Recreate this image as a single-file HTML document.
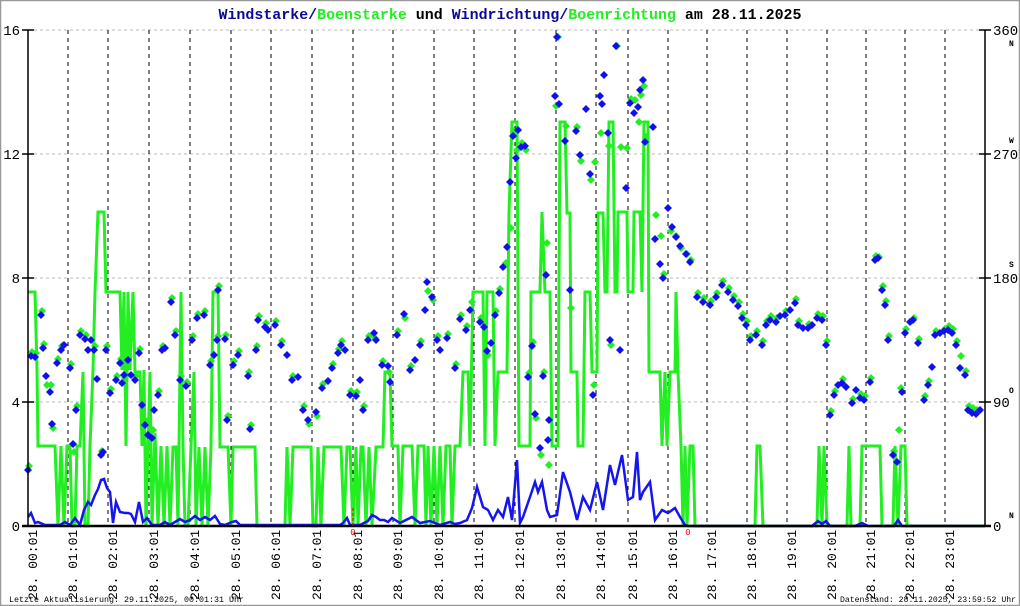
<!DOCTYPE html>
<html><head><meta charset="utf-8"><style>
html,body{margin:0;padding:0;background:#fff;}
svg{display:block;}
text{font-family:"Liberation Mono","DejaVu Sans Mono",monospace;}
</style></head><body>
<svg width="1020" height="606" viewBox="0 0 1020 606" xmlns="http://www.w3.org/2000/svg">
<defs>
<path id="db" d="M0,-4 L4,0 L0,4 L-4,0 Z" fill="#1010ee"/>
<path id="dg" d="M0,-4 L4,0 L0,4 L-4,0 Z" fill="#22ee22"/>
</defs>
<rect x="0.5" y="0.5" width="1019" height="605" fill="#fff" stroke="#999" stroke-width="1.5"/>
<text x="510" y="19" text-anchor="middle" font-size="15" font-weight="bold" textLength="583" lengthAdjust="spacingAndGlyphs"><tspan fill="#0a0a9a">Windstarke/</tspan><tspan fill="#22ee22">Boenstarke</tspan><tspan fill="#000"> und </tspan><tspan fill="#0a0a9a">Windrichtung/</tspan><tspan fill="#22ee22">Boenrichtung</tspan><tspan fill="#000"> am 28.11.2025</tspan></text>
<g stroke="#bbb" stroke-width="1" stroke-dasharray="3,3">
<line x1="28" y1="30" x2="985" y2="30"/><line x1="28" y1="154" x2="985" y2="154"/><line x1="28" y1="278" x2="985" y2="278"/><line x1="28" y1="402" x2="985" y2="402"/>
</g>
<g stroke="#000" stroke-width="1" stroke-dasharray="4,4">
<line x1="68" y1="30" x2="68" y2="526"/><line x1="108" y1="30" x2="108" y2="526"/><line x1="149" y1="30" x2="149" y2="526"/><line x1="190" y1="30" x2="190" y2="526"/><line x1="231" y1="30" x2="231" y2="526"/><line x1="271" y1="30" x2="271" y2="526"/><line x1="312" y1="30" x2="312" y2="526"/><line x1="353" y1="30" x2="353" y2="526"/><line x1="393" y1="30" x2="393" y2="526"/><line x1="434" y1="30" x2="434" y2="526"/><line x1="474" y1="30" x2="474" y2="526"/><line x1="515" y1="30" x2="515" y2="526"/><line x1="556" y1="30" x2="556" y2="526"/><line x1="596" y1="30" x2="596" y2="526"/><line x1="628" y1="30" x2="628" y2="526"/><line x1="668" y1="30" x2="668" y2="526"/><line x1="707" y1="30" x2="707" y2="526"/><line x1="747" y1="30" x2="747" y2="526"/><line x1="787" y1="30" x2="787" y2="526"/><line x1="827" y1="30" x2="827" y2="526"/><line x1="866" y1="30" x2="866" y2="526"/><line x1="905" y1="30" x2="905" y2="526"/><line x1="945" y1="30" x2="945" y2="526"/>
</g>
<polyline fill="none" stroke="#22ee22" stroke-width="3" stroke-linejoin="miter" points="28,292 35,292 37,370 38,446 55,446 58,526 61,446 64,526 67,446 70,446 72,526 75,526 77,446 80,446 83,372 85,526 88,526 90,446 93,370 95,292 98,212 104,212 106,292 108,292 120,292 122,370 124,292 126,446 128,292 130,370 133,292 135,372 140,372 142,446 144,370 146,526 148,446 150,372 152,526 155,433 158,526 161,446 164,526 167,446 170,526 173,447 176,447 178,526 181,292 183,447 185,526 188,526 191,447 194,372 196,526 199,447 202,526 205,447 208,526 211,447 213,292 218,292 220,447 228,447 231,526 233,447 255,447 257,526 285,526 287,447 290,526 293,447 311,447 313,526 316,526 318,447 321,526 324,447 341,447 344,526 347,447 350,447 353,526 356,447 358,526 361,447 363,447 366,526 369,447 372,526 376,447 383,447 385,372 390,372 392,446 398,446 400,526 403,446 412,446 415,526 418,446 424,446 426,526 428,446 431,526 434,446 437,526 440,446 443,526 446,446 450,446 452,526 455,446 460,446 463,372 468,372 470,446 473,292 483,292 485,446 487,292 493,292 495,446 498,372 507,372 509,213 512,122 517,122 519,446 530,446 531,292 540,292 542,212 545,292 550,292 552,446 558,446 560,122 565,122 567,213 570,213 571,372 577,372 578,446 583,446 585,292 590,292 592,372 597,372 598,213 603,213 605,292 607,292 609,122 613,122 615,292 617,292 618,212 627,212 628,292 633,292 634,212 640,212 642,292 644,122 648,122 649,372 660,372 662,446 665,372 667,446 670,372 675,372 676,292 678,372 681,446 683,526 685,446 687,526 690,446 693,446 695,526 697,526 755,526 757,446 760,446 763,526 817,526 819,446 822,526 824,446 827,526 830,526 833,526 847,526 849,446 851,526 860,526 862,446 880,446 882,526 893,526 895,446 898,526 901,446 905,446 907,526 985,526"/>
<polyline fill="none" stroke="#1515ee" stroke-width="2.5" points="28,517 31,513 35,523 38,522 45,525 60,525 65,522 70,525 75,518 80,525 84,510 88,502 91,505 95,495 98,489 101,480 104,479 107,488 110,492 113,523 116,502 120,512 125,513 128,513 131,514 135,522 139,502 143,522 147,518 152,525 160,525 165,522 170,525 180,519 185,522 190,520 195,516 200,520 205,517 210,520 215,516 220,524 225,525 232,522 236,521 240,525 300,525 340,525 343,523 347,518 350,525 360,525 368,521 372,515 376,517 380,520 384,520 388,522 392,518 400,523 404,521 412,517 420,523 430,521 440,525 450,522 455,524 460,523 467,520 472,508 477,487 483,507 488,510 493,520 498,510 503,517 508,497 512,520 517,460 520,523 523,517 530,497 535,482 538,492 542,482 547,510 550,517 557,515 563,472 570,492 577,520 583,497 590,510 597,482 603,510 610,465 615,485 622,455 628,500 633,497 637,452 640,500 643,492 650,482 655,520 662,510 668,513 675,508 680,517 685,525 688,526 812,526 818,521 822,524 826,521 830,526 855,526 862,523 868,526 894,526 898,520 902,526 985,526"/>
<g>
<use href="#dg" x="29" y="466"/><use href="#dg" x="32" y="352"/><use href="#dg" x="36" y="353"/><use href="#dg" x="42" y="311"/><use href="#dg" x="44" y="344"/><use href="#dg" x="47" y="385"/><use href="#dg" x="51" y="385"/><use href="#dg" x="53" y="428"/><use href="#dg" x="58" y="359"/><use href="#dg" x="62" y="346"/><use href="#dg" x="71" y="364"/><use href="#dg" x="74" y="452"/><use href="#dg" x="77" y="406"/><use href="#dg" x="81" y="331"/><use href="#dg" x="86" y="335"/><use href="#dg" x="95" y="346"/><use href="#dg" x="102" y="451"/><use href="#dg" x="107" y="346"/><use href="#dg" x="111" y="389"/><use href="#dg" x="117" y="376"/><use href="#dg" x="121" y="359"/><use href="#dg" x="125" y="378"/><use href="#dg" x="129" y="356"/><use href="#dg" x="136" y="376"/><use href="#dg" x="140" y="349"/><use href="#dg" x="146" y="421"/><use href="#dg" x="153" y="430"/><use href="#dg" x="159" y="391"/><use href="#dg" x="163" y="346"/><use href="#dg" x="172" y="298"/><use href="#dg" x="176" y="331"/><use href="#dg" x="181" y="376"/><use href="#dg" x="187" y="382"/><use href="#dg" x="193" y="336"/><use href="#dg" x="198" y="314"/><use href="#dg" x="205" y="311"/><use href="#dg" x="211" y="361"/><use href="#dg" x="218" y="336"/><use href="#dg" x="219" y="286"/><use href="#dg" x="226" y="335"/><use href="#dg" x="228" y="416"/><use href="#dg" x="234" y="361"/><use href="#dg" x="239" y="351"/><use href="#dg" x="249" y="372"/><use href="#dg" x="251" y="425"/><use href="#dg" x="257" y="346"/><use href="#dg" x="259" y="316"/><use href="#dg" x="266" y="323"/><use href="#dg" x="276" y="321"/><use href="#dg" x="282" y="341"/><use href="#dg" x="293" y="376"/><use href="#dg" x="304" y="406"/><use href="#dg" x="309" y="424"/><use href="#dg" x="317" y="416"/><use href="#dg" x="323" y="384"/><use href="#dg" x="333" y="364"/><use href="#dg" x="339" y="349"/><use href="#dg" x="342" y="341"/><use href="#dg" x="351" y="391"/><use href="#dg" x="357" y="392"/><use href="#dg" x="364" y="406"/><use href="#dg" x="369" y="336"/><use href="#dg" x="375" y="338"/><use href="#dg" x="383" y="361"/><use href="#dg" x="389" y="372"/><use href="#dg" x="398" y="331"/><use href="#dg" x="405" y="318"/><use href="#dg" x="411" y="366"/><use href="#dg" x="421" y="341"/><use href="#dg" x="428" y="291"/><use href="#dg" x="433" y="300"/><use href="#dg" x="438" y="336"/><use href="#dg" x="448" y="334"/><use href="#dg" x="456" y="364"/><use href="#dg" x="461" y="315"/><use href="#dg" x="467" y="326"/><use href="#dg" x="472" y="302"/><use href="#dg" x="481" y="318"/><use href="#dg" x="488" y="355"/><use href="#dg" x="496" y="311"/><use href="#dg" x="500" y="289"/><use href="#dg" x="506" y="263"/><use href="#dg" x="511" y="228"/><use href="#dg" x="514" y="131"/><use href="#dg" x="517" y="150"/><use href="#dg" x="522" y="143"/><use href="#dg" x="526" y="150"/><use href="#dg" x="529" y="373"/><use href="#dg" x="533" y="342"/><use href="#dg" x="536" y="418"/><use href="#dg" x="541" y="455"/><use href="#dg" x="544" y="372"/><use href="#dg" x="547" y="243"/><use href="#dg" x="549" y="465"/><use href="#dg" x="556" y="106"/><use href="#dg" x="558" y="37"/><use href="#dg" x="566" y="126"/><use href="#dg" x="571" y="308"/><use href="#dg" x="577" y="127"/><use href="#dg" x="581" y="161"/><use href="#dg" x="591" y="180"/><use href="#dg" x="594" y="385"/><use href="#dg" x="595" y="162"/><use href="#dg" x="601" y="133"/><use href="#dg" x="609" y="146"/><use href="#dg" x="611" y="345"/><use href="#dg" x="617" y="46"/><use href="#dg" x="621" y="147"/><use href="#dg" x="627" y="148"/><use href="#dg" x="631" y="99"/><use href="#dg" x="635" y="100"/><use href="#dg" x="639" y="122"/><use href="#dg" x="641" y="95"/><use href="#dg" x="644" y="86"/><use href="#dg" x="646" y="137"/><use href="#dg" x="656" y="215"/><use href="#dg" x="661" y="236"/><use href="#dg" x="664" y="274"/><use href="#dg" x="671" y="231"/><use href="#dg" x="676" y="236"/><use href="#dg" x="681" y="248"/><use href="#dg" x="687" y="254"/><use href="#dg" x="691" y="260"/><use href="#dg" x="698" y="293"/><use href="#dg" x="704" y="298"/><use href="#dg" x="711" y="301"/><use href="#dg" x="717" y="293"/><use href="#dg" x="723" y="281"/><use href="#dg" x="729" y="288"/><use href="#dg" x="734" y="296"/><use href="#dg" x="739" y="302"/><use href="#dg" x="743" y="314"/><use href="#dg" x="747" y="321"/><use href="#dg" x="751" y="336"/><use href="#dg" x="757" y="331"/><use href="#dg" x="763" y="341"/><use href="#dg" x="767" y="321"/><use href="#dg" x="771" y="316"/><use href="#dg" x="777" y="318"/><use href="#dg" x="786" y="311"/><use href="#dg" x="796" y="299"/><use href="#dg" x="799" y="321"/><use href="#dg" x="809" y="324"/><use href="#dg" x="818" y="314"/><use href="#dg" x="823" y="316"/><use href="#dg" x="827" y="341"/><use href="#dg" x="831" y="411"/><use href="#dg" x="835" y="391"/><use href="#dg" x="843" y="379"/><use href="#dg" x="853" y="399"/><use href="#dg" x="861" y="394"/><use href="#dg" x="865" y="396"/><use href="#dg" x="871" y="378"/><use href="#dg" x="876" y="256"/><use href="#dg" x="879" y="257"/><use href="#dg" x="883" y="286"/><use href="#dg" x="886" y="301"/><use href="#dg" x="889" y="336"/><use href="#dg" x="894" y="451"/><use href="#dg" x="899" y="430"/><use href="#dg" x="901" y="388"/><use href="#dg" x="906" y="329"/><use href="#dg" x="914" y="318"/><use href="#dg" x="919" y="339"/><use href="#dg" x="925" y="396"/><use href="#dg" x="929" y="381"/><use href="#dg" x="936" y="331"/><use href="#dg" x="945" y="329"/><use href="#dg" x="949" y="326"/><use href="#dg" x="953" y="329"/><use href="#dg" x="957" y="341"/><use href="#dg" x="961" y="356"/><use href="#dg" x="966" y="371"/><use href="#dg" x="969" y="406"/><use href="#dg" x="973" y="408"/><use href="#dg" x="977" y="410"/>
</g>
<g>
<use href="#db" x="28" y="470"/><use href="#db" x="31" y="356"/><use href="#db" x="35" y="357"/><use href="#db" x="41" y="315"/><use href="#db" x="43" y="348"/><use href="#db" x="46" y="376"/><use href="#db" x="50" y="392"/><use href="#db" x="52" y="424"/><use href="#db" x="57" y="363"/><use href="#db" x="61" y="350"/><use href="#db" x="64" y="345"/><use href="#db" x="70" y="368"/><use href="#db" x="73" y="444"/><use href="#db" x="76" y="410"/><use href="#db" x="80" y="335"/><use href="#db" x="85" y="339"/><use href="#db" x="88" y="350"/><use href="#db" x="91" y="340"/><use href="#db" x="94" y="350"/><use href="#db" x="97" y="379"/><use href="#db" x="101" y="455"/><use href="#db" x="103" y="452"/><use href="#db" x="106" y="350"/><use href="#db" x="110" y="393"/><use href="#db" x="116" y="380"/><use href="#db" x="120" y="363"/><use href="#db" x="122" y="383"/><use href="#db" x="124" y="375"/><use href="#db" x="128" y="360"/><use href="#db" x="131" y="375"/><use href="#db" x="135" y="380"/><use href="#db" x="139" y="353"/><use href="#db" x="142" y="405"/><use href="#db" x="145" y="425"/><use href="#db" x="148" y="435"/><use href="#db" x="152" y="438"/><use href="#db" x="154" y="410"/><use href="#db" x="158" y="395"/><use href="#db" x="162" y="350"/><use href="#db" x="165" y="348"/><use href="#db" x="171" y="302"/><use href="#db" x="175" y="335"/><use href="#db" x="180" y="380"/><use href="#db" x="186" y="386"/><use href="#db" x="192" y="340"/><use href="#db" x="197" y="318"/><use href="#db" x="204" y="315"/><use href="#db" x="210" y="365"/><use href="#db" x="214" y="355"/><use href="#db" x="217" y="340"/><use href="#db" x="218" y="290"/><use href="#db" x="225" y="339"/><use href="#db" x="227" y="420"/><use href="#db" x="233" y="365"/><use href="#db" x="238" y="355"/><use href="#db" x="248" y="376"/><use href="#db" x="250" y="429"/><use href="#db" x="256" y="350"/><use href="#db" x="258" y="320"/><use href="#db" x="265" y="327"/><use href="#db" x="268" y="330"/><use href="#db" x="275" y="325"/><use href="#db" x="281" y="345"/><use href="#db" x="287" y="355"/><use href="#db" x="292" y="380"/><use href="#db" x="298" y="377"/><use href="#db" x="303" y="410"/><use href="#db" x="308" y="420"/><use href="#db" x="316" y="412"/><use href="#db" x="322" y="388"/><use href="#db" x="328" y="381"/><use href="#db" x="332" y="368"/><use href="#db" x="338" y="353"/><use href="#db" x="341" y="345"/><use href="#db" x="345" y="350"/><use href="#db" x="350" y="395"/><use href="#db" x="356" y="396"/><use href="#db" x="360" y="380"/><use href="#db" x="363" y="410"/><use href="#db" x="368" y="340"/><use href="#db" x="374" y="333"/><use href="#db" x="376" y="340"/><use href="#db" x="382" y="365"/><use href="#db" x="388" y="366"/><use href="#db" x="390" y="382"/><use href="#db" x="397" y="335"/><use href="#db" x="404" y="314"/><use href="#db" x="410" y="370"/><use href="#db" x="415" y="360"/><use href="#db" x="420" y="345"/><use href="#db" x="425" y="310"/><use href="#db" x="427" y="282"/><use href="#db" x="432" y="297"/><use href="#db" x="437" y="340"/><use href="#db" x="440" y="350"/><use href="#db" x="447" y="338"/><use href="#db" x="455" y="368"/><use href="#db" x="460" y="319"/><use href="#db" x="466" y="330"/><use href="#db" x="470" y="310"/><use href="#db" x="480" y="322"/><use href="#db" x="484" y="327"/><use href="#db" x="487" y="351"/><use href="#db" x="491" y="343"/><use href="#db" x="495" y="315"/><use href="#db" x="499" y="293"/><use href="#db" x="503" y="267"/><use href="#db" x="507" y="247"/><use href="#db" x="510" y="182"/><use href="#db" x="513" y="136"/><use href="#db" x="516" y="158"/><use href="#db" x="518" y="130"/><use href="#db" x="521" y="147"/><use href="#db" x="525" y="146"/><use href="#db" x="528" y="377"/><use href="#db" x="532" y="346"/><use href="#db" x="535" y="414"/><use href="#db" x="540" y="448"/><use href="#db" x="543" y="376"/><use href="#db" x="546" y="275"/><use href="#db" x="548" y="440"/><use href="#db" x="549" y="420"/><use href="#db" x="555" y="96"/><use href="#db" x="557" y="37"/><use href="#db" x="559" y="104"/><use href="#db" x="565" y="141"/><use href="#db" x="570" y="290"/><use href="#db" x="576" y="131"/><use href="#db" x="580" y="155"/><use href="#db" x="586" y="109"/><use href="#db" x="590" y="174"/><use href="#db" x="593" y="395"/><use href="#db" x="600" y="96"/><use href="#db" x="602" y="104"/><use href="#db" x="608" y="133"/><use href="#db" x="604" y="75"/><use href="#db" x="610" y="340"/><use href="#db" x="616" y="46"/><use href="#db" x="620" y="350"/><use href="#db" x="626" y="188"/><use href="#db" x="630" y="103"/><use href="#db" x="634" y="113"/><use href="#db" x="638" y="107"/><use href="#db" x="640" y="90"/><use href="#db" x="643" y="80"/><use href="#db" x="645" y="142"/><use href="#db" x="653" y="127"/><use href="#db" x="655" y="239"/><use href="#db" x="660" y="264"/><use href="#db" x="663" y="278"/><use href="#db" x="668" y="208"/><use href="#db" x="672" y="227"/><use href="#db" x="676" y="237"/><use href="#db" x="680" y="246"/><use href="#db" x="686" y="254"/><use href="#db" x="690" y="262"/><use href="#db" x="697" y="297"/><use href="#db" x="703" y="302"/><use href="#db" x="710" y="305"/><use href="#db" x="716" y="297"/><use href="#db" x="722" y="285"/><use href="#db" x="728" y="292"/><use href="#db" x="733" y="300"/><use href="#db" x="738" y="306"/><use href="#db" x="742" y="318"/><use href="#db" x="746" y="325"/><use href="#db" x="750" y="340"/><use href="#db" x="756" y="335"/><use href="#db" x="762" y="345"/><use href="#db" x="766" y="325"/><use href="#db" x="770" y="320"/><use href="#db" x="776" y="322"/><use href="#db" x="780" y="316"/><use href="#db" x="785" y="315"/><use href="#db" x="790" y="310"/><use href="#db" x="795" y="303"/><use href="#db" x="798" y="325"/><use href="#db" x="803" y="328"/><use href="#db" x="808" y="328"/><use href="#db" x="812" y="325"/><use href="#db" x="817" y="318"/><use href="#db" x="822" y="320"/><use href="#db" x="826" y="345"/><use href="#db" x="830" y="415"/><use href="#db" x="834" y="395"/><use href="#db" x="838" y="385"/><use href="#db" x="842" y="383"/><use href="#db" x="846" y="387"/><use href="#db" x="852" y="403"/><use href="#db" x="856" y="390"/><use href="#db" x="860" y="398"/><use href="#db" x="864" y="400"/><use href="#db" x="870" y="382"/><use href="#db" x="875" y="260"/><use href="#db" x="878" y="258"/><use href="#db" x="882" y="290"/><use href="#db" x="885" y="305"/><use href="#db" x="888" y="340"/><use href="#db" x="893" y="455"/><use href="#db" x="897" y="462"/><use href="#db" x="902" y="392"/><use href="#db" x="905" y="333"/><use href="#db" x="910" y="322"/><use href="#db" x="913" y="320"/><use href="#db" x="918" y="343"/><use href="#db" x="924" y="400"/><use href="#db" x="928" y="385"/><use href="#db" x="932" y="367"/><use href="#db" x="935" y="335"/><use href="#db" x="940" y="333"/><use href="#db" x="944" y="331"/><use href="#db" x="948" y="330"/><use href="#db" x="952" y="333"/><use href="#db" x="956" y="345"/><use href="#db" x="960" y="368"/><use href="#db" x="965" y="375"/><use href="#db" x="968" y="410"/><use href="#db" x="972" y="413"/><use href="#db" x="976" y="414"/><use href="#db" x="980" y="410"/>
</g>
<g stroke="#000" stroke-width="1.5">
<line x1="28" y1="30" x2="28" y2="527"/><line x1="985" y1="30" x2="985" y2="527"/>
<line x1="22" y1="30" x2="34" y2="30"/><line x1="22" y1="154" x2="34" y2="154"/><line x1="22" y1="278" x2="34" y2="278"/><line x1="22" y1="402" x2="34" y2="402"/>
<line x1="979" y1="30" x2="991" y2="30"/><line x1="979" y1="154" x2="991" y2="154"/><line x1="979" y1="278" x2="991" y2="278"/><line x1="979" y1="402" x2="991" y2="402"/>
</g>
<line x1="22" y1="526" x2="991" y2="526" stroke="#000" stroke-width="2.5"/>
<line x1="353" y1="508" x2="353" y2="526" stroke="#e00" stroke-width="1" stroke-dasharray="3,2"/>
<text x="353" y="535" font-size="9" fill="#e00" text-anchor="middle">0</text>
<text x="688" y="535" font-size="9" fill="#e00" text-anchor="middle">0</text>
<g font-size="14" fill="#000">
<text x="20" y="35" text-anchor="end">16</text><text x="20" y="159" text-anchor="end">12</text><text x="20" y="283" text-anchor="end">8</text><text x="20" y="407" text-anchor="end">4</text><text x="20" y="531" text-anchor="end">0</text>
<text x="993" y="35">360</text><text x="993" y="159">270</text><text x="993" y="283">180</text><text x="993" y="407">90</text><text x="993" y="531">0</text>
</g>
<g font-size="8" font-weight="bold" fill="#000">
<text x="1009" y="46">N</text><text x="1009" y="143">W</text><text x="1009" y="267">S</text><text x="1009" y="393">O</text><text x="1009" y="518">N</text>
</g>
<g font-size="13" fill="#000">
<text transform="translate(37,600) rotate(-90)">28. 00:01</text>
<text transform="translate(77,600) rotate(-90)">28. 01:01</text>
<text transform="translate(117,600) rotate(-90)">28. 02:01</text>
<text transform="translate(158,600) rotate(-90)">28. 03:01</text>
<text transform="translate(199,600) rotate(-90)">28. 04:01</text>
<text transform="translate(240,600) rotate(-90)">28. 05:01</text>
<text transform="translate(280,600) rotate(-90)">28. 06:01</text>
<text transform="translate(321,600) rotate(-90)">28. 07:01</text>
<text transform="translate(362,600) rotate(-90)">28. 08:01</text>
<text transform="translate(402,600) rotate(-90)">28. 09:01</text>
<text transform="translate(443,600) rotate(-90)">28. 10:01</text>
<text transform="translate(483,600) rotate(-90)">28. 11:01</text>
<text transform="translate(524,600) rotate(-90)">28. 12:01</text>
<text transform="translate(565,600) rotate(-90)">28. 13:01</text>
<text transform="translate(605,600) rotate(-90)">28. 14:01</text>
<text transform="translate(637,600) rotate(-90)">28. 15:01</text>
<text transform="translate(677,600) rotate(-90)">28. 16:01</text>
<text transform="translate(716,600) rotate(-90)">28. 17:01</text>
<text transform="translate(756,600) rotate(-90)">28. 18:01</text>
<text transform="translate(796,600) rotate(-90)">28. 19:01</text>
<text transform="translate(836,600) rotate(-90)">28. 20:01</text>
<text transform="translate(875,600) rotate(-90)">28. 21:01</text>
<text transform="translate(914,600) rotate(-90)">28. 22:01</text>
<text transform="translate(954,600) rotate(-90)">28. 23:01</text>
</g>
<text x="9" y="602" font-size="8" fill="#000" textLength="235" lengthAdjust="spacingAndGlyphs">Letzte Aktualisierung: 29.11.2025, 00:01:31 Uhr</text>
<text x="840" y="602" font-size="8" fill="#000" textLength="176" lengthAdjust="spacingAndGlyphs">Datenstand: 28.11.2025, 23:59:52 Uhr</text>
</svg>
</body></html>
